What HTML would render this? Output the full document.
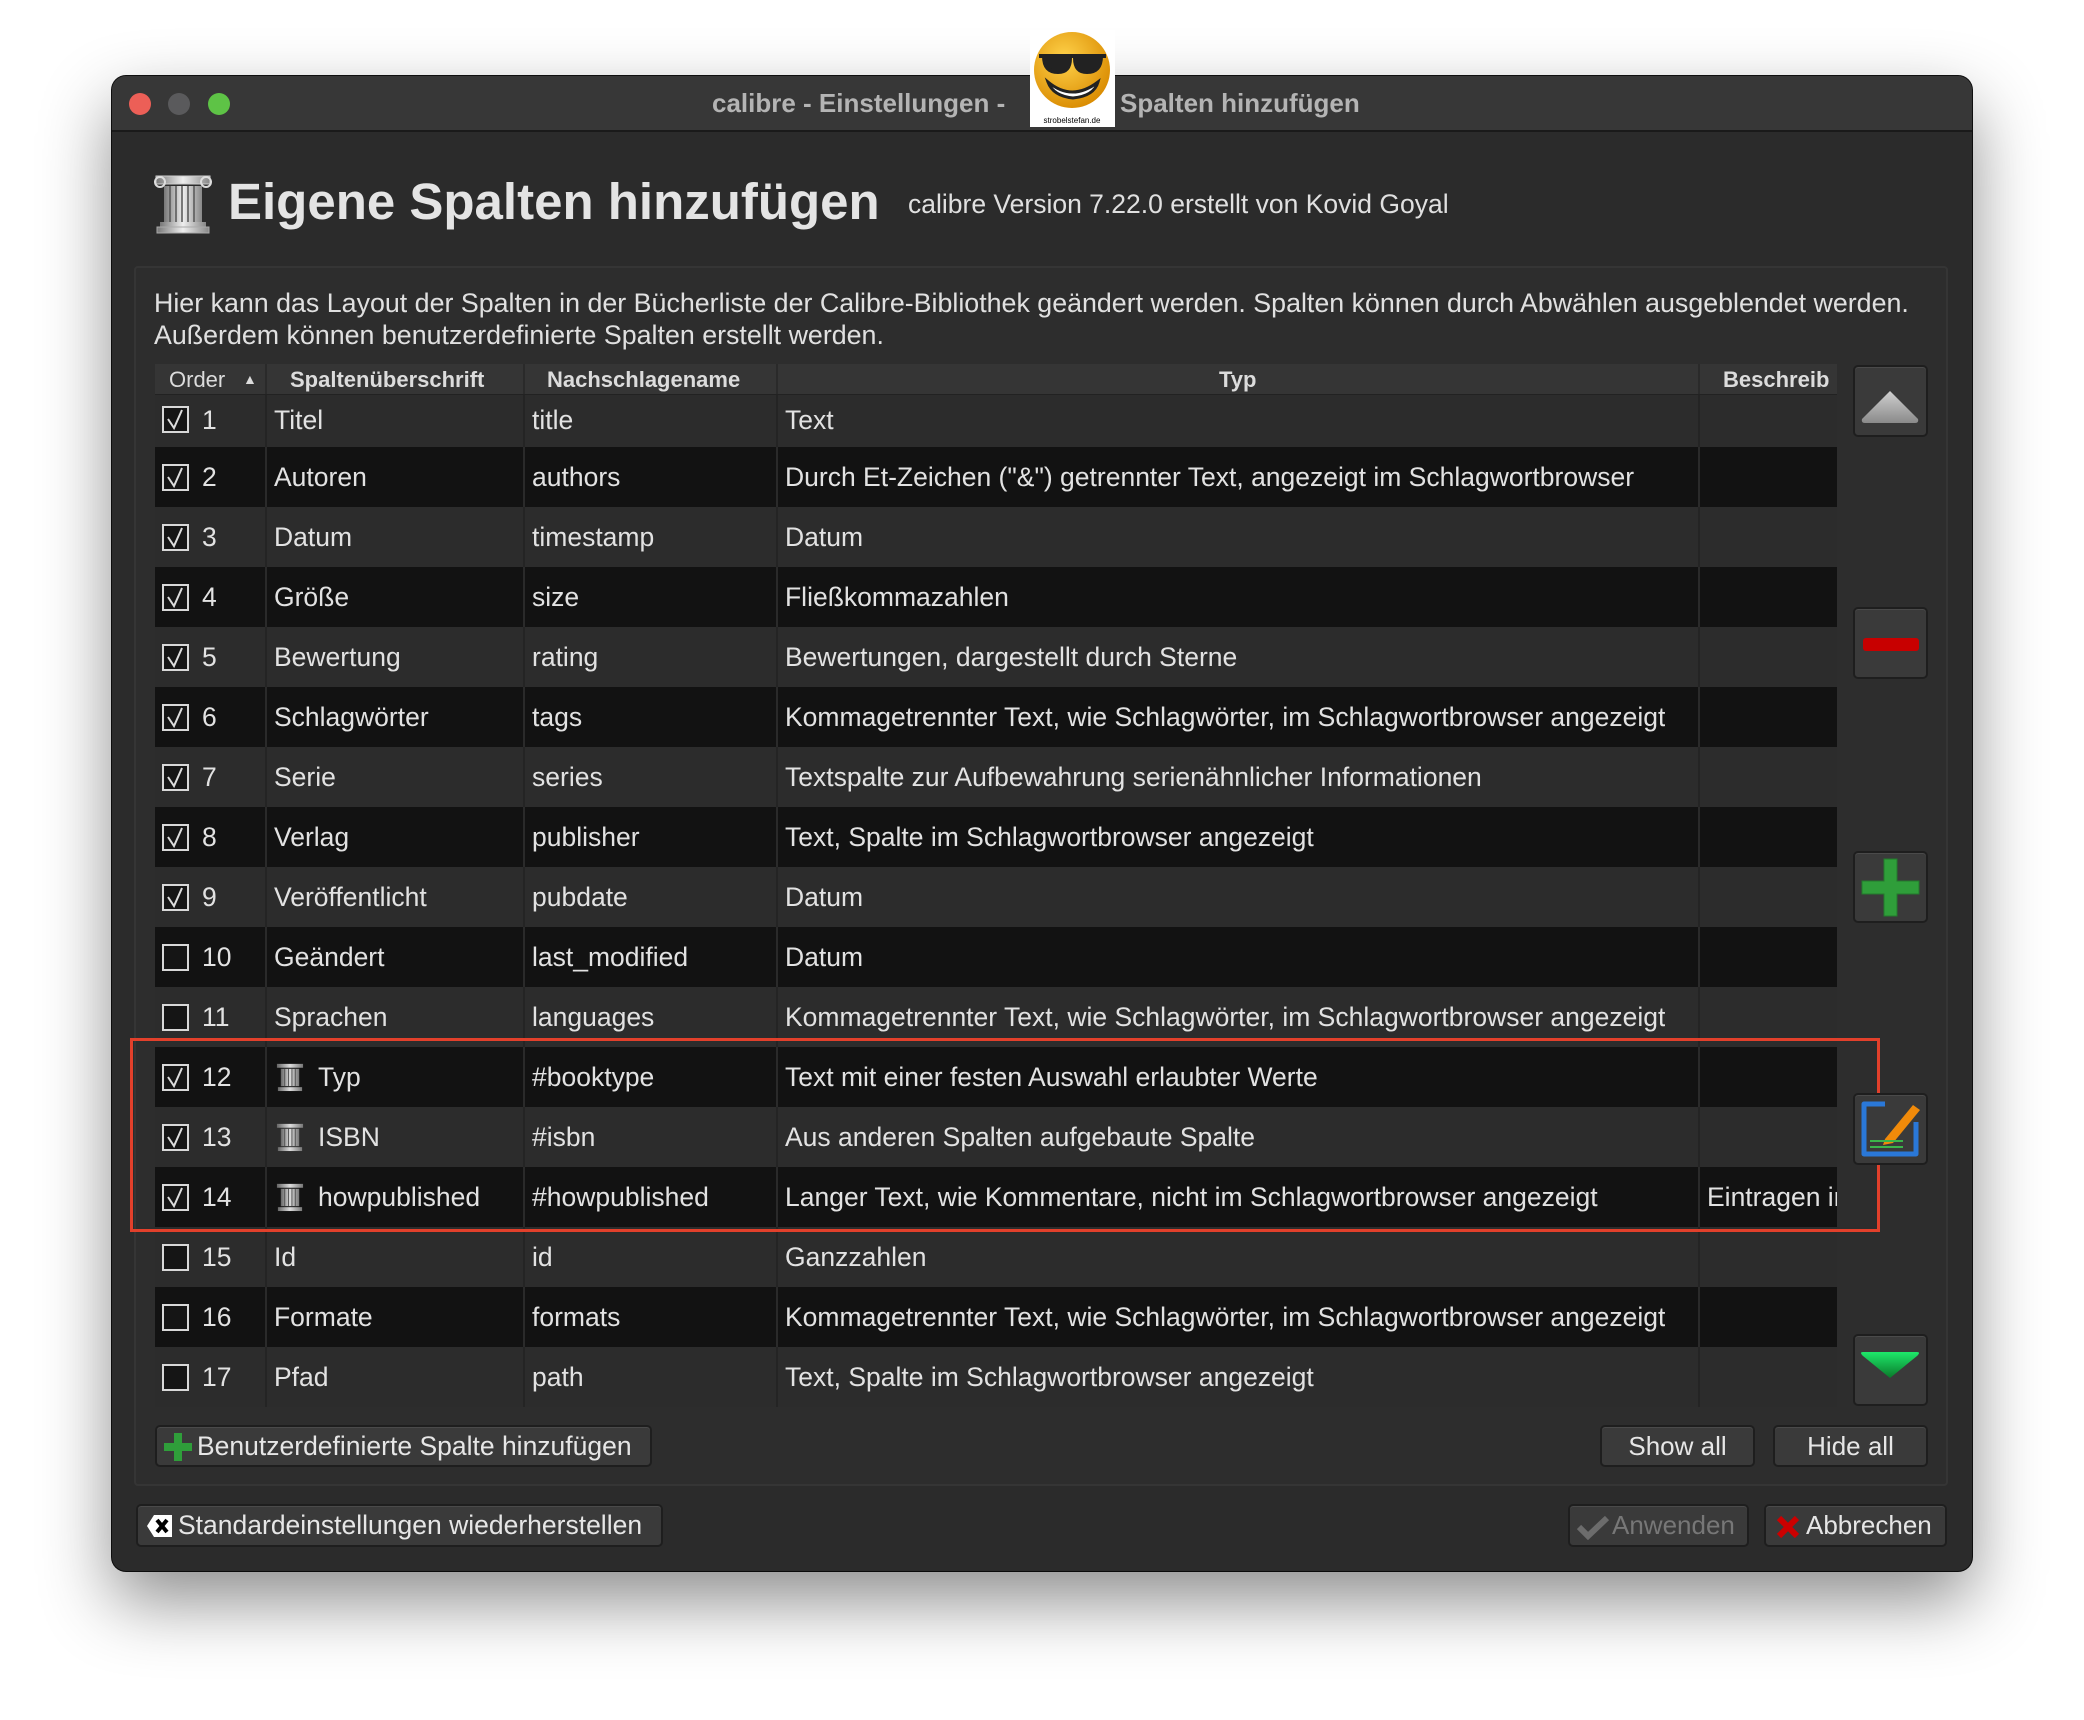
<!DOCTYPE html>
<html><head><meta charset="utf-8">
<style>
*{box-sizing:border-box;margin:0;padding:0}
body{width:2084px;height:1720px;background:#fff;position:relative;overflow:hidden;font-family:"Liberation Sans",sans-serif;color:#e2e2e2}
.abs{position:absolute}
.win{left:112px;top:76px;width:1860px;height:1495px;background:#2b2b2b;border-radius:14px;box-shadow:0 30px 70px rgba(0,0,0,.45),0 0 0 1px #111;overflow:hidden}
.tb{left:0;top:0;width:1860px;height:56px;background:#373737;border-bottom:2px solid #1a1a1a}
.dot{width:22px;height:22px;border-radius:50%;top:17px}
.ttl{top:12px;font-weight:bold;font-size:26px;color:#b4b4b4;white-space:nowrap}
.group{left:134px;top:266px;width:1814px;height:1220px;border:2px solid #353535;border-radius:4px;background:#2d2d2d}
.row{position:absolute;left:155px;width:1682px;height:60px;font-size:26.5px;line-height:60px;white-space:nowrap}
.l{background:#2c2c2c}.d{background:#121212}
.c{position:absolute;top:0;height:100%;overflow:hidden}
.sep{position:absolute;top:0;height:100%;width:2px;background:#242424}
.d .sep{background:#2a2a2a}
.cb{position:absolute;left:7px;top:17px;width:27px;height:27px;border:2px solid #d8d8d8;background:#151515}
.cb svg{display:block;position:absolute;left:0;top:0}
.hdr{position:absolute;left:155px;top:364px;width:1682px;height:31px;background:#353535;font-size:22px;font-weight:bold;line-height:31px;color:#dcdcdc;border-bottom:1px solid #222}
.btn{position:absolute;background:#3a3a3a;border:2px solid #1e1e1e;border-radius:5px;box-shadow:inset 0 1px 0 #4a4a4a;font-size:26px;color:#e6e6e6;text-align:center}
.sb{left:1853px;width:75px;height:72px}
</style></head><body>
<div class="abs win">
 <div class="abs tb">
  <div class="abs dot" style="left:17px;background:#ec5f57"></div>
  <div class="abs dot" style="left:56px;background:#5a5a5c"></div>
  <div class="abs dot" style="left:96px;background:#5ec346"></div>
  <div class="abs ttl" style="left:600px">calibre - Einstellungen -</div>
  <div class="abs ttl" style="left:1008px">Spalten hinzufügen</div>
 </div>
</div>
<div class="abs" style="left:1030px;top:30px;width:85px;height:97px;background:#fff">
 <svg width="85" height="97" viewBox="0 0 85 97"><defs><radialGradient id="sg" cx=".4" cy=".35" r=".7"><stop offset="0" stop-color="#ffd24a"/><stop offset="1" stop-color="#d98a00"/></radialGradient></defs>
 <circle cx="42" cy="40" r="38" fill="url(#sg)"/>
 <path d="M9 26 H76 M14 26 q0 16 14 16 q12 0 12 -14 M45 28 q0 14 12 14 q14 0 14 -16" stroke="#222" stroke-width="4" fill="#222"/>
 <path d="M18 52 q24 20 50 0 q-4 14 -25 16 q-20 -2 -25 -16z" fill="#fff" stroke="#222" stroke-width="3"/>
 <text x="42" y="93" font-size="8" fill="#000" text-anchor="middle" font-family="Liberation Sans">strobelstefan.de</text></svg>
</div>
<svg class="abs" style="left:152px;top:172px" width="62" height="62" viewBox="0 0 62 62"><defs><linearGradient id="cg" x1="0" x2="1"><stop offset="0" stop-color="#777"/><stop offset=".5" stop-color="#eee"/><stop offset="1" stop-color="#888"/></linearGradient></defs>
<path d="M4 4 H58 V12 H4Z" fill="url(#cg)" stroke="#ccc"/><circle cx="8" cy="10" r="5" fill="none" stroke="#ddd" stroke-width="2"/><circle cx="54" cy="10" r="5" fill="none" stroke="#ddd" stroke-width="2"/>
<rect x="12" y="14" width="38" height="36" fill="url(#cg)"/><path d="M18 14V50M24 14V50M30 14V50M36 14V50M42 14V50" stroke="#555" stroke-width="1.5"/>
<rect x="8" y="50" width="46" height="5" fill="url(#cg)"/><rect x="5" y="55" width="52" height="6" fill="url(#cg)" stroke="#aaa"/></svg>
<div class="abs" style="left:228px;top:172px;font-size:51px;font-weight:bold;color:#e4e4e4;white-space:nowrap">Eigene Spalten hinzufügen</div>
<div class="abs" style="left:908px;top:189px;font-size:26.5px;color:#e0e0e0;white-space:nowrap">calibre Version 7.22.0 erstellt von Kovid Goyal</div>
<div class="abs group"></div>
<div class="abs" style="left:154px;top:287px;font-size:26.8px;line-height:32px;color:#e0e0e0;white-space:nowrap">Hier kann das Layout der Spalten in der Bücherliste der Calibre-Bibliothek geändert werden. Spalten können durch Abwählen ausgeblendet werden.<br>Außerdem können benutzerdefinierte Spalten erstellt werden.</div>

<div class="hdr">
 <span class="abs" style="left:14px;font-weight:normal">Order</span><span class="abs" style="left:88px;font-size:14px">▲</span>
 <div class="sep" style="left:110px;background:#2a2a2a"></div>
 <span class="abs" style="left:135px">Spaltenüberschrift</span>
 <div class="sep" style="left:368px;background:#2a2a2a"></div>
 <span class="abs" style="left:392px">Nachschlagename</span>
 <div class="sep" style="left:621px;background:#2a2a2a"></div>
 <span class="abs" style="left:1064px">Typ</span>
 <div class="sep" style="left:1543px;background:#2a2a2a"></div>
 <span class="abs" style="left:1568px">Beschreib</span>
</div>

<div class="row l" style="top:395px;height:52px;line-height:50px"><div class="cb" style="top:11px"><svg width="23" height="23"><path d="M4 11 L10 20 L18 2" stroke="#ddd" stroke-width="2" fill="none"/></svg></div><span class="c" style="left:47px">1</span><div class="sep" style="left:110px"></div><span class="c" style="left:119px">Titel</span><div class="sep" style="left:368px"></div><span class="c" style="left:377px">title</span><div class="sep" style="left:621px"></div><span class="c" style="left:630px">Text</span><div class="sep" style="left:1543px"></div></div>
<div class="row d" style="top:447px"><div class="cb"><svg width="23" height="23"><path d="M4 11 L10 20 L18 2" stroke="#ddd" stroke-width="2" fill="none"/></svg></div><span class="c" style="left:47px">2</span><div class="sep" style="left:110px"></div><span class="c" style="left:119px">Autoren</span><div class="sep" style="left:368px"></div><span class="c" style="left:377px">authors</span><div class="sep" style="left:621px"></div><span class="c" style="left:630px">Durch Et-Zeichen ("&amp;") getrennter Text, angezeigt im Schlagwortbrowser</span><div class="sep" style="left:1543px"></div></div>
<div class="row l" style="top:507px"><div class="cb"><svg width="23" height="23"><path d="M4 11 L10 20 L18 2" stroke="#ddd" stroke-width="2" fill="none"/></svg></div><span class="c" style="left:47px">3</span><div class="sep" style="left:110px"></div><span class="c" style="left:119px">Datum</span><div class="sep" style="left:368px"></div><span class="c" style="left:377px">timestamp</span><div class="sep" style="left:621px"></div><span class="c" style="left:630px">Datum</span><div class="sep" style="left:1543px"></div></div>
<div class="row d" style="top:567px"><div class="cb"><svg width="23" height="23"><path d="M4 11 L10 20 L18 2" stroke="#ddd" stroke-width="2" fill="none"/></svg></div><span class="c" style="left:47px">4</span><div class="sep" style="left:110px"></div><span class="c" style="left:119px">Größe</span><div class="sep" style="left:368px"></div><span class="c" style="left:377px">size</span><div class="sep" style="left:621px"></div><span class="c" style="left:630px">Fließkommazahlen</span><div class="sep" style="left:1543px"></div></div>
<div class="row l" style="top:627px"><div class="cb"><svg width="23" height="23"><path d="M4 11 L10 20 L18 2" stroke="#ddd" stroke-width="2" fill="none"/></svg></div><span class="c" style="left:47px">5</span><div class="sep" style="left:110px"></div><span class="c" style="left:119px">Bewertung</span><div class="sep" style="left:368px"></div><span class="c" style="left:377px">rating</span><div class="sep" style="left:621px"></div><span class="c" style="left:630px">Bewertungen, dargestellt durch Sterne</span><div class="sep" style="left:1543px"></div></div>
<div class="row d" style="top:687px"><div class="cb"><svg width="23" height="23"><path d="M4 11 L10 20 L18 2" stroke="#ddd" stroke-width="2" fill="none"/></svg></div><span class="c" style="left:47px">6</span><div class="sep" style="left:110px"></div><span class="c" style="left:119px">Schlagwörter</span><div class="sep" style="left:368px"></div><span class="c" style="left:377px">tags</span><div class="sep" style="left:621px"></div><span class="c" style="left:630px">Kommagetrennter Text, wie Schlagwörter, im Schlagwortbrowser angezeigt</span><div class="sep" style="left:1543px"></div></div>
<div class="row l" style="top:747px"><div class="cb"><svg width="23" height="23"><path d="M4 11 L10 20 L18 2" stroke="#ddd" stroke-width="2" fill="none"/></svg></div><span class="c" style="left:47px">7</span><div class="sep" style="left:110px"></div><span class="c" style="left:119px">Serie</span><div class="sep" style="left:368px"></div><span class="c" style="left:377px">series</span><div class="sep" style="left:621px"></div><span class="c" style="left:630px">Textspalte zur Aufbewahrung serienähnlicher Informationen</span><div class="sep" style="left:1543px"></div></div>
<div class="row d" style="top:807px"><div class="cb"><svg width="23" height="23"><path d="M4 11 L10 20 L18 2" stroke="#ddd" stroke-width="2" fill="none"/></svg></div><span class="c" style="left:47px">8</span><div class="sep" style="left:110px"></div><span class="c" style="left:119px">Verlag</span><div class="sep" style="left:368px"></div><span class="c" style="left:377px">publisher</span><div class="sep" style="left:621px"></div><span class="c" style="left:630px">Text, Spalte im Schlagwortbrowser angezeigt</span><div class="sep" style="left:1543px"></div></div>
<div class="row l" style="top:867px"><div class="cb"><svg width="23" height="23"><path d="M4 11 L10 20 L18 2" stroke="#ddd" stroke-width="2" fill="none"/></svg></div><span class="c" style="left:47px">9</span><div class="sep" style="left:110px"></div><span class="c" style="left:119px">Veröffentlicht</span><div class="sep" style="left:368px"></div><span class="c" style="left:377px">pubdate</span><div class="sep" style="left:621px"></div><span class="c" style="left:630px">Datum</span><div class="sep" style="left:1543px"></div></div>
<div class="row d" style="top:927px"><div class="cb"></div><span class="c" style="left:47px">10</span><div class="sep" style="left:110px"></div><span class="c" style="left:119px">Geändert</span><div class="sep" style="left:368px"></div><span class="c" style="left:377px">last_modified</span><div class="sep" style="left:621px"></div><span class="c" style="left:630px">Datum</span><div class="sep" style="left:1543px"></div></div>
<div class="row l" style="top:987px"><div class="cb"></div><span class="c" style="left:47px">11</span><div class="sep" style="left:110px"></div><span class="c" style="left:119px">Sprachen</span><div class="sep" style="left:368px"></div><span class="c" style="left:377px">languages</span><div class="sep" style="left:621px"></div><span class="c" style="left:630px">Kommagetrennter Text, wie Schlagwörter, im Schlagwortbrowser angezeigt</span><div class="sep" style="left:1543px"></div></div>
<div class="row d" style="top:1047px"><div class="cb"><svg width="23" height="23"><path d="M4 11 L10 20 L18 2" stroke="#ddd" stroke-width="2" fill="none"/></svg></div><span class="c" style="left:47px">12</span><div class="sep" style="left:110px"></div><svg class="c" style="left:120px;top:15px;height:30px" width="30" height="30" viewBox="0 0 62 62"><use href="#col"/></svg><span class="c" style="left:163px">Typ</span><div class="sep" style="left:368px"></div><span class="c" style="left:377px">#booktype</span><div class="sep" style="left:621px"></div><span class="c" style="left:630px">Text mit einer festen Auswahl erlaubter Werte</span><div class="sep" style="left:1543px"></div></div>
<div class="row l" style="top:1107px"><div class="cb"><svg width="23" height="23"><path d="M4 11 L10 20 L18 2" stroke="#ddd" stroke-width="2" fill="none"/></svg></div><span class="c" style="left:47px">13</span><div class="sep" style="left:110px"></div><svg class="c" style="left:120px;top:15px;height:30px" width="30" height="30" viewBox="0 0 62 62"><use href="#col"/></svg><span class="c" style="left:163px">ISBN</span><div class="sep" style="left:368px"></div><span class="c" style="left:377px">#isbn</span><div class="sep" style="left:621px"></div><span class="c" style="left:630px">Aus anderen Spalten aufgebaute Spalte</span><div class="sep" style="left:1543px"></div></div>
<div class="row d" style="top:1167px"><div class="cb"><svg width="23" height="23"><path d="M4 11 L10 20 L18 2" stroke="#ddd" stroke-width="2" fill="none"/></svg></div><span class="c" style="left:47px">14</span><div class="sep" style="left:110px"></div><svg class="c" style="left:120px;top:15px;height:30px" width="30" height="30" viewBox="0 0 62 62"><use href="#col"/></svg><span class="c" style="left:163px">howpublished</span><div class="sep" style="left:368px"></div><span class="c" style="left:377px">#howpublished</span><div class="sep" style="left:621px"></div><span class="c" style="left:630px">Langer Text, wie Kommentare, nicht im Schlagwortbrowser angezeigt</span><div class="sep" style="left:1543px"></div><span class="c" style="left:1552px;width:130px">Eintragen in</span></div>
<div class="row l" style="top:1227px"><div class="cb"></div><span class="c" style="left:47px">15</span><div class="sep" style="left:110px"></div><span class="c" style="left:119px">Id</span><div class="sep" style="left:368px"></div><span class="c" style="left:377px">id</span><div class="sep" style="left:621px"></div><span class="c" style="left:630px">Ganzzahlen</span><div class="sep" style="left:1543px"></div></div>
<div class="row d" style="top:1287px"><div class="cb"></div><span class="c" style="left:47px">16</span><div class="sep" style="left:110px"></div><span class="c" style="left:119px">Formate</span><div class="sep" style="left:368px"></div><span class="c" style="left:377px">formats</span><div class="sep" style="left:621px"></div><span class="c" style="left:630px">Kommagetrennter Text, wie Schlagwörter, im Schlagwortbrowser angezeigt</span><div class="sep" style="left:1543px"></div></div>
<div class="row l" style="top:1347px"><div class="cb"></div><span class="c" style="left:47px">17</span><div class="sep" style="left:110px"></div><span class="c" style="left:119px">Pfad</span><div class="sep" style="left:368px"></div><span class="c" style="left:377px">path</span><div class="sep" style="left:621px"></div><span class="c" style="left:630px">Text, Spalte im Schlagwortbrowser angezeigt</span><div class="sep" style="left:1543px"></div></div>

<svg width="0" height="0" style="position:absolute"><defs><linearGradient id="cg2" x1="0" x2="1"><stop offset="0" stop-color="#666"/><stop offset=".5" stop-color="#ddd"/><stop offset="1" stop-color="#777"/></linearGradient>
<g id="col"><path d="M4 4 H58 V12 H4Z" fill="url(#cg2)"/><rect x="12" y="14" width="38" height="36" fill="url(#cg2)"/><path d="M20 14V50M28 14V50M35 14V50M42 14V50" stroke="#555" stroke-width="2"/><rect x="6" y="52" width="50" height="8" fill="url(#cg2)"/></g></defs></svg>

<div class="abs" style="left:130px;top:1038px;width:1750px;height:194px;border:3px solid #e2402b"></div>

<div class="btn sb" style="top:365px"><svg width="71" height="68"><defs><linearGradient id="ug" x1="0" y1="0" x2="0" y2="1"><stop offset="0" stop-color="#d0d0d0"/><stop offset="1" stop-color="#8a8a8a"/></linearGradient></defs><path d="M7 52 L35 24 L63 52 Q64 56 60 56 H10 Q6 56 7 52Z" fill="url(#ug)"/></svg></div>
<div class="btn sb" style="top:607px"><svg width="71" height="68"><rect x="8" y="29" width="56" height="13" rx="3" fill="#c80000"/></svg></div>
<div class="btn sb" style="top:851px"><svg width="71" height="68"><path d="M29 6h13v22h22v13H42v22H29V41H7V28h22z" fill="#2f9e3a" stroke="#237a2c"/></svg></div>
<div class="btn sb" style="top:1093px"><svg width="71" height="68"><path d="M30 9H9v50h52V27" stroke="#2a78d8" stroke-width="5" fill="none" stroke-linejoin="round"/><path d="M30 44 L58 10 L65 15 L38 48 L28 50Z" fill="#f08a0a"/><path d="M15 46H48M15 52H48" stroke="#3bb54a" stroke-width="2"/></svg></div>
<div class="btn sb" style="top:1334px"><svg width="71" height="68"><defs><linearGradient id="dg" x1="0" y1="0" x2="0" y2="1"><stop offset="0" stop-color="#1ee86a"/><stop offset="1" stop-color="#0a7a2a"/></linearGradient></defs><path d="M8 16 H62 Q66 16 62 20 L35 42 L8 20 Q4 16 8 16Z" fill="url(#dg)"/></svg></div>

<div class="btn" style="left:155px;top:1425px;width:497px;height:42px;line-height:38px;text-align:left;padding-left:40px;font-size:26.5px">
<svg class="abs" style="left:6px;top:5px" width="30" height="30"><path d="M11 1h8v10h10v8H19v10h-8V19H1v-8h10z" fill="#2f9e3a"/></svg>Benutzerdefinierte Spalte hinzufügen</div>
<div class="btn" style="left:1600px;top:1425px;width:155px;height:42px;line-height:38px">Show all</div>
<div class="btn" style="left:1773px;top:1425px;width:155px;height:42px;line-height:38px">Hide all</div>

<div class="btn" style="left:136px;top:1504px;width:527px;height:43px;line-height:39px;text-align:left;padding-left:40px;font-size:26.5px">
<svg class="abs" style="left:8px;top:8px" width="28" height="24"><path d="M8 1H26V23H8L1 12Z" fill="#fff"/><path d="M11 6L21 18M21 6L11 18" stroke="#000" stroke-width="4"/></svg>Standardeinstellungen wiederherstellen</div>
<div class="btn" style="left:1568px;top:1504px;width:181px;height:43px;line-height:39px;color:#777;text-align:left;padding-left:42px">
<svg class="abs" style="left:6px;top:8px" width="34" height="26"><path d="M3 13L12 22L31 4" stroke="#6c6c6c" stroke-width="6" fill="none"/></svg>Anwenden</div>
<div class="btn" style="left:1764px;top:1504px;width:183px;height:43px;line-height:39px;text-align:left;padding-left:40px">
<svg class="abs" style="left:10px;top:9px" width="24" height="24"><path d="M3 3L21 21M21 3L3 21" stroke="#c00" stroke-width="6"/></svg>Abbrechen</div>
</body></html>
